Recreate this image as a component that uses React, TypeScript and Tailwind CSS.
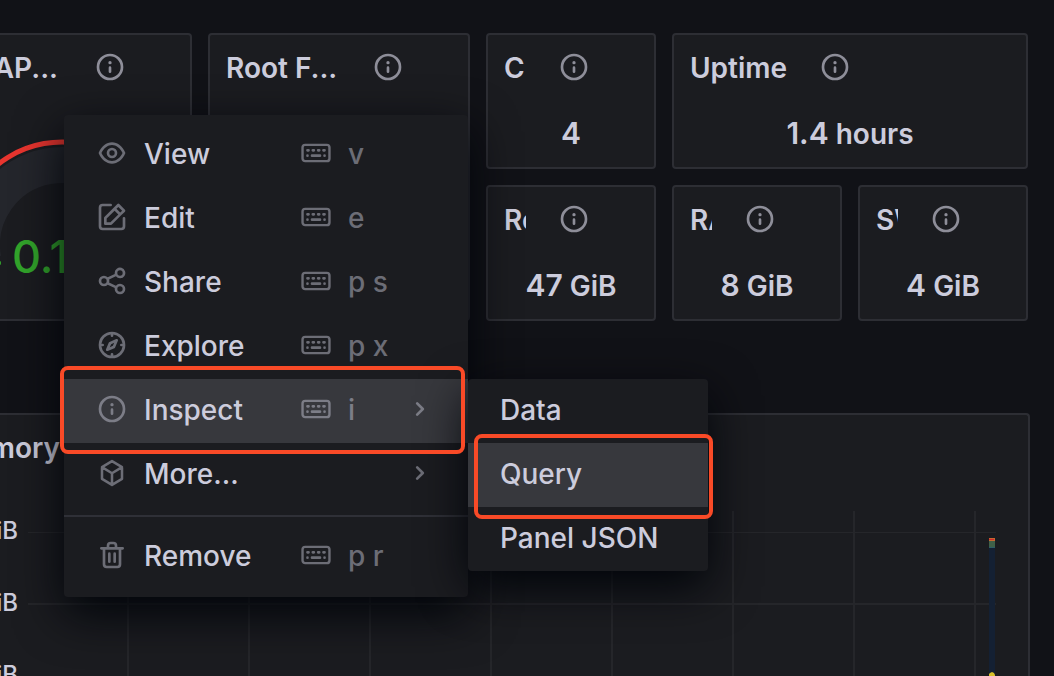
import React from "react";
import clsx from "clsx";

const ICONS = {
  eye: "M21.92,11.6C19.9,6.91,16.1,4,12,4S4.1,6.91,2.08,11.6a1,1,0,0,0,0,.8C4.1,17.09,7.9,20,12,20s7.9-2.91,9.92-7.6A1,1,0,0,0,21.92,11.6ZM12,18c-3.17,0-6.17-2.29-7.9-6C5.83,8.29,8.83,6,12,6s6.17,2.29,7.9,6C18.17,15.71,15.17,18,12,18ZM12,8a4,4,0,1,0,4,4A4,4,0,0,0,12,8Zm0,6a2,2,0,1,1,2-2A2,2,0,0,1,12,14Z",
  edit: "M21,12a1,1,0,0,0-1,1v6a1,1,0,0,1-1,1H5a1,1,0,0,1-1-1V5A1,1,0,0,1,5,4h6a1,1,0,0,0,0-2H5A3,3,0,0,0,2,5V19a3,3,0,0,0,3,3H19a3,3,0,0,0,3-3V13A1,1,0,0,0,21,12ZM6,12.76V17a1,1,0,0,0,1,1h4.24a1,1,0,0,0,.71-.29l6.92-6.93h0L21.71,8a1,1,0,0,0,0-1.42L17.47,2.29a1,1,0,0,0-1.42,0L13.23,5.12h0L6.29,12.05A1,1,0,0,0,6,12.76ZM16.76,4.41l2.83,2.83L18.17,8.66,15.34,5.83ZM8,13.17l5.93-5.93,2.83,2.83L10.83,16H8Z",
  share: "M18,14a4,4,0,0,0-3.08,1.48l-5.1-2.35a3.64,3.64,0,0,0,0-2.26l5.1-2.35A4,4,0,1,0,14,6a4.17,4.17,0,0,0,.07.71L8.79,9.14a4,4,0,1,0,0,5.72l5.28,2.43A4.17,4.17,0,0,0,14,18a4,4,0,1,0,4-4ZM18,4a2,2,0,1,1-2,2A2,2,0,0,1,18,4ZM6,14a2,2,0,1,1,2-2A2,2,0,0,1,6,14Zm12,6a2,2,0,1,1,2-2A2,2,0,0,1,18,20Z",
  compass: "M12,2A10,10,0,1,0,22,12,10,10,0,0,0,12,2Zm1,17.93V19a1,1,0,0,0-2,0v.93A8,8,0,0,1,4.07,13H5a1,1,0,0,0,0-2H4.07A8,8,0,0,1,11,4.07V5a1,1,0,0,0,2,0V4.07A8,8,0,0,1,19.93,11H19a1,1,0,0,0,0,2h.93A8,8,0,0,1,13,19.93ZM15.14,7.55l-5,2.12a1,1,0,0,0-.52.52l-2.12,5a1,1,0,0,0,.21,1.1,1,1,0,0,0,.7.3.93.93,0,0,0,.4-.09l5-2.12a1,1,0,0,0,.52-.52l2.12-5a1,1,0,0,0-1.31-1.31Zm-2.49,5.1-2.28,1,1-2.28,2.28-1Z",
  info: "M12,2A10,10,0,1,0,22,12,10,10,0,0,0,12,2Zm0,18a8,8,0,1,1,8-8A8,8,0,0,1,12,20Zm0-8.5a1,1,0,0,0-1,1v3a1,1,0,0,0,2,0v-3A1,1,0,0,0,12,11.5Zm0-4a1.25,1.25,0,1,0,1.25,1.25A1.25,1.25,0,0,0,12,7.5Z",
  trash: "M10,18a1,1,0,0,0,1-1V11a1,1,0,0,0-2,0v6A1,1,0,0,0,10,18ZM20,6H16V5a3,3,0,0,0-3-3H11A3,3,0,0,0,8,5V6H4A1,1,0,0,0,4,8H5V19a3,3,0,0,0,3,3h8a3,3,0,0,0,3-3V8h1a1,1,0,0,0,0-2ZM10,5a1,1,0,0,1,1-1h2a1,1,0,0,1,1,1V6H10Zm7,14a1,1,0,0,1-1,1H8a1,1,0,0,1-1-1V8H17Zm-3-1a1,1,0,0,0,1-1V11a1,1,0,0,0-2,0v6A1,1,0,0,0,14,18Z",
  angle: "M14.83,11.29,10.59,7.05a1,1,0,0,0-1.42,0,1,1,0,0,0,0,1.41L12.71,12,9.17,15.54a1,1,0,0,0,0,1.41,1,1,0,0,0,.71.29,1,1,0,0,0,.71-.29l4.24-4.24A1,1,0,0,0,14.83,11.29Z",
};

type IconName = keyof typeof ICONS | "cube" | "keyboard";

function Icon({ name, className }: { name: IconName; className?: string }) {
  const cls = clsx("size-8 shrink-0", className);
  if (name === "cube") {
    return (
      <svg viewBox="0 0 24 24" className={cls} fill="none" stroke="currentColor" strokeWidth="1.9" strokeLinejoin="round" strokeLinecap="round" aria-hidden="true">
        <path d="M12 3.1 19.5 7.6v8.8L12 20.9 4.5 16.4V7.6ZM4.5 7.6 12 12.2l7.5-4.6M12 12.2v8.7" />
      </svg>
    );
  }
  if (name === "keyboard") {
    return (
      <svg viewBox="0 0 24 24" className={cls} fill="none" stroke="currentColor" strokeLinecap="round" aria-hidden="true">
        <rect x="1.9" y="5.9" width="20.2" height="12.2" rx="2" strokeWidth="1.8" />
        <path strokeWidth="2" d="M5.6 10h.8M9.6 10h.8M13.6 10h.8M17.6 10h.8M5.6 14h.01M9 14h6M18.4 14h.01" />
      </svg>
    );
  }
  return (
    <svg viewBox="0 0 24 24" className={cls} fill="currentColor" aria-hidden="true">
      <path d={ICONS[name]} />
    </svg>
  );
}

const PANEL = "border-2 border-[#2d2e34] bg-[#1b1c20]";

function InfoButton() {
  return (
    <button type="button" aria-label="Panel description" className="text-[#8e8e99]">
      <Icon name="info" className="block" />
    </button>
  );
}

function StatPanel({ title, narrow, value, unit, className }: {
  title: string;
  narrow?: boolean;
  value: string;
  unit?: string;
  className?: string;
}) {
  return (
    <section className={clsx(PANEL, "flex h-34 flex-col rounded", className)}>
      <header className="flex h-16 items-center gap-8 px-4">
        <h2 className={clsx("overflow-hidden pt-0.5 text-[28px] leading-10 font-semibold whitespace-nowrap", narrow && "w-[22px]")}>{title}</h2>
        <InfoButton />
      </header>
      <p className="pt-3.5 text-center text-[30px] leading-10 font-semibold">
        {value}
        {unit && <span className="text-[28px]"> {unit}</span>}
      </p>
    </section>
  );
}

function Gauge() {
  return (
    <div className="relative h-52">
      <svg viewBox="0 0 190 208" className="block h-52 w-[190px]" aria-hidden="true">
        <circle cx="62" cy="146" r="80" fill="none" stroke="#24262c" strokeWidth="36" strokeDasharray="280 600" transform="rotate(170 62 146)" />
        <circle cx="62" cy="146" r="103" fill="none" stroke="#e8352f" strokeWidth="5" strokeDasharray="360 700" transform="rotate(170 62 146)" />
        <ellipse cx="0" cy="164" rx="1" ry="2" fill="#32a52b" />
      </svg>
      <span className="absolute top-[130px] left-3 text-[45px] leading-14 font-medium text-[#32a52b]">0.1%</span>
    </div>
  );
}

function MemoryPanel() {
  const columns = [100, 221, 342, 463, 584, 705, 826, 947];
  return (
    <section className={clsx(PANEL, "mt-23 mr-6 min-h-0 flex-1 overflow-hidden rounded-tr border-b-0 border-l-0")}>
      <header className="flex h-16 w-[60px] items-center justify-end overflow-hidden pt-0.5">
        <h2 className="text-[28px] leading-10 font-semibold">mory</h2>
      </header>
      <div className="flex pt-8">
        <ul className="flex w-7 flex-col items-end pt-0.5 pr-2.5 text-[24px] leading-[36px] font-medium">
          <li className="h-[72px]">iB</li>
          <li className="h-[72px]">iB</li>
          <li className="h-[72px]">iB</li>
        </ul>
        <svg viewBox="0 0 968 165" preserveAspectRatio="none" className="mr-8 h-[165px] min-w-0 flex-1" role="img" aria-label="Memory usage">
          <g fill="#25262a">
            <rect y="21" width="968" height="1" />
            <rect y="92" width="968" height="2" />
            {columns.map((x) => (
              <rect key={x} x={x - 1} width="2" height="165" />
            ))}
          </g>
          <rect x="961" y="27" width="6" height="138" fill="#142033" />
          <rect x="961" y="27" width="6" height="3" fill="#c8672f" />
          <rect x="961" y="28" width="5" height="1" fill="#d0282c" />
          <rect x="961" y="30" width="6" height="7" fill="#3f6048" />
          <rect x="961" y="36" width="6" height="1" fill="#2c5d68" />
          <path d="M961 165v-2l1-1 2-1 2 1 1 2v1Z" fill="#d8c02a" />
        </svg>
      </div>
    </section>
  );
}

interface MenuEntry {
  icon: IconName;
  label: string;
  keys?: string;
  submenu?: boolean;
  active?: boolean;
}

const ENTRIES: MenuEntry[] = [
  { icon: "eye", label: "View", keys: "v" },
  { icon: "edit", label: "Edit", keys: "e" },
  { icon: "share", label: "Share", keys: "p s" },
  { icon: "compass", label: "Explore", keys: "p x" },
  { icon: "info", label: "Inspect", keys: "i", submenu: true, active: true },
  { icon: "cube", label: "More...", submenu: true },
];

function MenuItem({ icon, label, keys, submenu, active }: MenuEntry) {
  return (
    <button
      type="button"
      role="menuitem"
      aria-haspopup={submenu ? "menu" : undefined}
      className={clsx(
        "flex h-16 w-full items-center gap-4 px-8 pb-1 text-left text-[28px] leading-10 font-medium",
        active ? "bg-[#37383d] text-[#7c7d87]" : "text-[#6c6d76]",
      )}
    >
      <Icon name={icon} />
      <span className="w-35 pt-0.5 text-[#ccccdc]">{label}</span>
      {keys && (
        <>
          <Icon name="keyboard" />
          <kbd className="pt-0.5 font-['Inter',sans-serif]">{keys}</kbd>
        </>
      )}
      {submenu && <Icon name="angle" className="ml-auto" />}
    </button>
  );
}

const FLOATING = "absolute rounded bg-[#1b1c20] shadow-[0_16px_48px_rgb(1,4,9)]";

export default function App() {
  return (
    <main className="relative flex h-screen flex-col overflow-hidden bg-[#111217] pt-[33px] font-['Inter',sans-serif] text-[#ccccdc]">
      <div className="flex gap-4 pr-[26px]">
        <section className={clsx(PANEL, "h-72 w-48 shrink-0 overflow-hidden rounded-r border-l-0")}>
          <header className="flex h-16 items-center gap-8">
            <div className="flex w-[62px] justify-end overflow-hidden pt-0.5 pr-1">
              <h2 className="text-[28px] leading-10 font-semibold">AP...</h2>
            </div>
            <InfoButton />
          </header>
          <Gauge />
        </section>
        <section className={clsx(PANEL, "h-72 w-[262px] shrink-0 rounded")}>
          <header className="flex h-16 items-center gap-8 px-4">
            <h2 className="w-[114px] pt-0.5 text-[28px] leading-10 font-semibold whitespace-nowrap">Root F...</h2>
            <InfoButton />
          </header>
        </section>
        <div className="grid min-w-0 flex-1 grid-cols-3 gap-4">
          <StatPanel title="C" narrow value="4" />
          <StatPanel title="Uptime" value="1.4" unit="hours" className="col-span-2" />
          <StatPanel title="Ro" narrow value="47" unit="GiB" />
          <StatPanel title="RA" narrow value="8" unit="GiB" />
          <StatPanel title="SW" narrow value="4" unit="GiB" />
        </div>
      </div>

      <MemoryPanel />

      <div role="menu" aria-label="Panel menu" className={clsx(FLOATING, "top-[115px] left-16 w-[404px] py-2")}>
        {ENTRIES.map((entry) => (
          <MenuItem key={entry.label} {...entry} />
        ))}
        <hr className="my-2 border-t-2 border-[#2f3037]" />
        <MenuItem icon="trash" label="Remove" keys="p r" />
      </div>

      <div role="menu" aria-label="Inspect" className={clsx(FLOATING, "top-[379px] left-[468px] w-60")}>
        {["Data", "Query", "Panel JSON"].map((label) => (
          <button
            key={label}
            type="button"
            role="menuitem"
            className={clsx("block h-16 w-full px-8 pb-0.5 text-left text-[28px] leading-10 font-medium", label === "Query" && "bg-[#37383d]")}
          >
            {label}
          </button>
        ))}
      </div>

      <div className="pointer-events-none absolute top-[366px] left-[60px] h-[88px] w-[405px] rounded-lg border-4 border-[#f94a27]" />
      <div className="pointer-events-none absolute top-[434px] left-[474px] h-[85px] w-[239px] rounded-lg border-4 border-[#f94a27]" />
    </main>
  );
}
